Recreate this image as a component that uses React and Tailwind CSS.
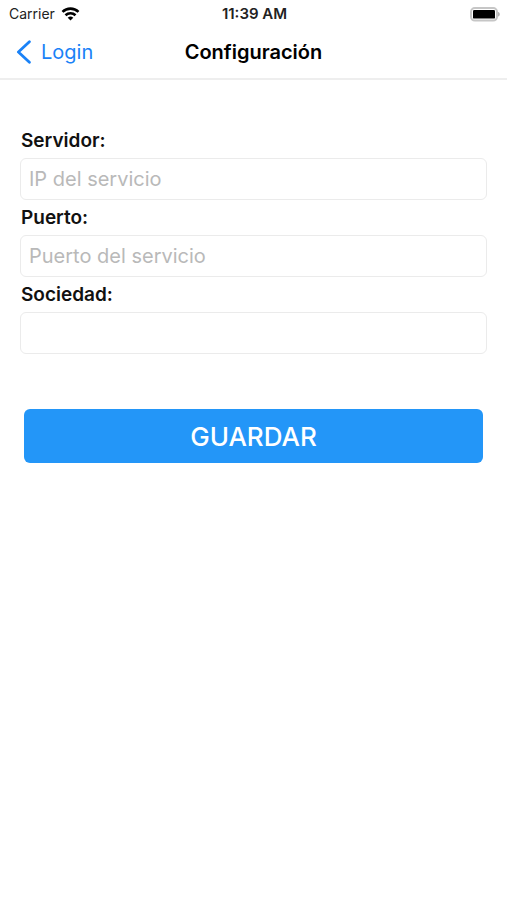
import { useState } from "react";

const fields = [
  { id: "servidor", label: "Servidor:", placeholder: "IP del servicio" },
  { id: "puerto", label: "Puerto:", placeholder: "Puerto del servicio" },
  { id: "sociedad", label: "Sociedad:", placeholder: "" },
];

const StatusBar = () => {
  return (
    <div className="grid h-7 grid-cols-3 items-center pl-[9px] pr-[7px] text-[#222]">
      <div className="flex items-center gap-[6px] text-sm">
        <span>Carrier</span>
        <svg className="h-[14px] w-[19px]" viewBox="0 0 18 14" fill="none" stroke="#000" strokeWidth="2.6">
          <path d="M1 4.9a11.5 11.5 0 0 1 16 0" />
          <path d="M4 8.3a7.2 7.2 0 0 1 10 0" />
          <path d="M9 13.6 6.2 10.8a4 4 0 0 1 5.6 0z" fill="#000" stroke="none" />
        </svg>
      </div>
      <span className="text-center text-[15px] font-semibold">11:39 AM</span>
      <svg className="h-[15px] w-[30px] justify-self-end" viewBox="0 0 30 15">
        <rect x="1" y="1" width="26" height="12.6" rx="3.8" fill="#fff" stroke="#c6c6c6" strokeWidth="2" />
        <rect x="3" y="3" width="22" height="8.6" rx="1.2" fill="#000" />
        <path d="M28 5c1.1.3 1.8 1.2 1.8 2.3s-.7 2-1.8 2.3z" fill="#b4b4b4" />
      </svg>
    </div>
  );
};

const NavBar = () => {
  return (
    <header className="grid h-[52px] grid-cols-[1fr_auto_1fr] items-center border-b-2 border-[#eeeeee] px-4 pb-[2px] text-xl">
      <a href="#login" className="flex items-center gap-[9px] text-[#1a82f7]">
        <svg className="h-6 w-4" viewBox="0 0 16 24" fill="none" stroke="currentColor" strokeWidth="2.8" strokeLinecap="round" strokeLinejoin="round">
          <path d="M13.4 1.8 2.4 12l11 10.2" />
        </svg>
        <span>Login</span>
      </a>
      <h1 className="font-semibold text-black">Configuración</h1>
    </header>
  );
};

const App = () => {
  const [values, setValues] = useState({ servidor: "", puerto: "", sociedad: "" });

  const handleChange = (e) => {
    setValues({ ...values, [e.target.id]: e.target.value });
  };

  return (
    <div className="min-h-screen bg-white font-['Inter',sans-serif]">
      <StatusBar />
      <NavBar />
      <form className="px-5 pt-[43px]" onSubmit={(e) => e.preventDefault()}>
        {fields.map((field) => (
          <div key={field.id} className="flex flex-col">
            <label htmlFor={field.id} className="pl-px text-[19px] leading-[35px] font-semibold text-[#111]">
              {field.label}
            </label>
            <input
              id={field.id}
              type="text"
              value={values[field.id]}
              onChange={handleChange}
              placeholder={field.placeholder}
              className="h-[42px] w-full rounded-md border border-[#ebebeb] px-2 text-xl text-black placeholder:text-[#b9b9b9]"
            />
          </div>
        ))}
        <div className="px-1 pt-[55px]">
          <button type="submit" className="h-[54px] w-full rounded-md bg-[#2396f8] text-[26px] font-medium text-white">
            GUARDAR
          </button>
        </div>
      </form>
    </div>
  );
};

export default App;
